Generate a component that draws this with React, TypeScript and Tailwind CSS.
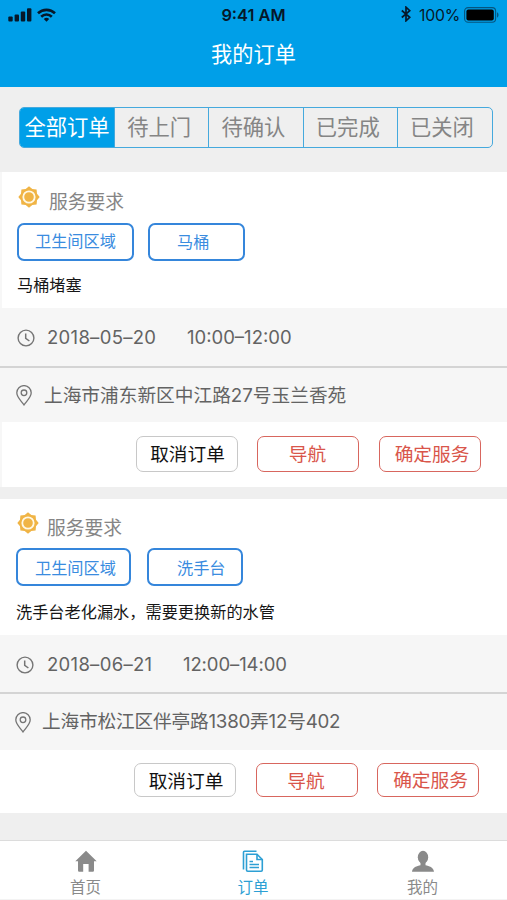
import type { ReactNode } from "react";

type Order = {
  area: string;
  item: string;
  detail: string;
  date: string;
  time: string;
  address: string;
};

const orders: Order[] = [
  {
    area: "卫生间区域",
    item: "马桶",
    detail: "马桶堵塞",
    date: "2018–05–20",
    time: "10:00–12:00",
    address: "上海市浦东新区中江路27号玉兰香苑",
  },
  {
    area: "卫生间区域",
    item: "洗手台",
    detail: "洗手台老化漏水，需要更换新的水管",
    date: "2018–06–21",
    time: "12:00–14:00",
    address: "上海市松江区伴亭路1380弄12号402",
  },
];

const tabs = ["待上门", "待确认", "已完成", "已关闭"];

const SunIcon = () => (
  <svg className="w-[22px] h-[22px] shrink-0" viewBox="0 0 22 22">
    <path
      d="M11 .3 14.3 3 18.6 3.4 19 7.7 21.7 11 19 14.3 18.6 18.6 14.3 19 11 21.7 7.7 19 3.4 18.6 3 14.3 .3 11 3 7.7 3.4 3.4 7.7 3Z"
      fill="#f0b445"
    />
    <circle cx="11" cy="11" r="5.7" fill="#f0b445" stroke="#fff8e4" strokeWidth="1.8" />
  </svg>
);

const ClockIcon = () => (
  <svg className="w-[18px] h-[18px] shrink-0" viewBox="0 0 18 18" fill="none" stroke="#757575">
    <circle cx="9" cy="9" r="7.9" strokeWidth="1.4" />
    <path d="M8.7 4.5V9.3L12.4 12" strokeWidth="1.5" />
  </svg>
);

const PinIcon = () => (
  <svg className="w-4 h-[21px] shrink-0" viewBox="0 0 16 21" fill="none" stroke="#757575" strokeWidth="1.3">
    <path d="M8 20C5.5 16.3.8 12.2.8 7.8a7.2 7.2 0 0 1 14.4 0C15.2 12.2 10.5 16.3 8 20Z" />
    <circle cx="8" cy="7.8" r="2.8" />
  </svg>
);

const StatusBar = () => (
  <div className="flex h-[31px] items-center px-2 text-[#06182a]">
    <div className="flex flex-1 items-center gap-[5px] pb-0.5">
      <svg className="w-6 h-[14px]" viewBox="0 0 24 14" fill="#06182a">
        <rect x="0.3" y="8.5" width="4.4" height="5" rx="1" />
        <rect x="6.6" y="6.5" width="4.4" height="7" rx="1" />
        <rect x="12.8" y="3.5" width="4.4" height="10" rx="1" />
        <rect x="19" y="0.3" width="4.4" height="13.2" rx="1" />
      </svg>
      <svg className="w-[19px] h-[14px]" viewBox="0 0 19 14" fill="none" stroke="#06182a" strokeWidth="2.6">
        <path d="M1 5.3a12.2 12.2 0 0 1 17 0" />
        <path d="M4.2 8.7a7.6 7.6 0 0 1 10.6 0" />
        <path d="M6.8 10.9a4 4 0 0 1 5.4 0L9.5 13.7Z" fill="#06182a" stroke="none" />
      </svg>
    </div>
    <span className="text-[16.4px] font-semibold">9:41 AM</span>
    <div className="flex flex-1 items-center justify-end">
      <svg className="mr-2 mb-1 w-[10px] h-4" viewBox="0 0 10 16" fill="none" stroke="#06182a" strokeWidth="1.7">
        <path d="M.8 4.5 8.8 11.3 5 14.8V1.2L8.8 4.7.8 11.5" />
      </svg>
      <span className="mr-1 text-[15.8px] tracking-[-0.2px]">100%</span>
      <svg className="mb-0.5 w-[35px] h-4" viewBox="0 0 35 16">
        <rect x="0.6" y="0.6" width="31" height="14.6" rx="3.5" fill="none" stroke="#06557f" strokeWidth="1.1" />
        <rect x="2.4" y="2.4" width="27.4" height="11" rx="2" fill="#000" />
        <path d="M33 5.2c2 .8 2 4.6 0 5.4Z" fill="#06557f" />
      </svg>
    </div>
  </div>
);

const Tag = ({ className, children }: { className: string; children: ReactNode }) => (
  <span
    className={`h-[38px] rounded-[7px] border-2 border-[#3586db] text-[16.2px] whitespace-nowrap text-[#3a8cdf] ${className}`}
  >
    {children}
  </span>
);

const ActionButton = ({ className, children }: { className: string; children: ReactNode }) => (
  <button
    className={`flex w-[102px] items-center justify-center rounded-[7px] border-[1.5px] text-[18.7px] ${className}`}
  >
    {children}
  </button>
);

const OrderCard = ({ order, second }: { order: Order; second?: boolean }) => (
  <section className="bg-white">
    <div className={second ? "h-[136px] pl-4 pt-[13px]" : "h-[136px] border-l-2 border-[#f7f7f7] pl-[15px] pt-[14px]"}>
      <div className={second ? "flex h-[23px] items-start gap-2 pl-px" : "flex h-[23px] items-start gap-[9px] pl-px"}>
        <SunIcon />
        <h2 className="pt-1 text-[18.8px] leading-[26px] text-[#858585]">服务要求</h2>
      </div>
      <div className={second ? "mt-[13px] flex gap-4" : "mt-[14px] flex gap-[14px]"}>
        <Tag className={second ? "w-[115px] pl-[17px] leading-[37px]" : "w-[117px] pl-4 leading-[33px]"}>
          {order.area}
        </Tag>
        <Tag className={second ? "w-24 pl-7 leading-[37px]" : "w-[97px] pl-[27px] leading-[34px]"}>
          {order.item}
        </Tag>
      </div>
      <p className={second ? "mt-[14px] text-[16.2px] leading-6 text-[#161616]" : "mt-3 text-[16.2px] leading-6 text-[#161616]"}>
        {order.detail}
      </p>
    </div>
    <div className="bg-[#f6f6f6] text-[18.7px] text-[#636363]">
      <div className={second ? "flex h-[57px] items-center pl-4 pt-0.5" : "flex h-[58px] items-center pl-[17px] pt-0.5"}>
        <ClockIcon />
        <span className={second ? "ml-[13px] w-[136px] text-[18.5px] tracking-[0.3px]" : "ml-3 w-[140px] text-[18.5px] tracking-[0.3px]"}>
          {order.date}
        </span>
        <span className={second ? "text-[18.5px] tracking-[-0.1px]" : "text-[18.5px]"}>{order.time}</span>
      </div>
      <div className={second ? "flex h-[58px] items-center border-t-2 border-[#d4d4d4] pl-[15px]" : "flex h-[56px] items-center border-t-2 border-[#d4d4d4] pl-4"}>
        <PinIcon />
        <span className={second ? "ml-[11px] whitespace-nowrap tracking-[-0.2px]" : "ml-3 pt-0.5 whitespace-nowrap"}>
          {order.address}
        </span>
      </div>
    </div>
    <div className={second ? "flex h-[63px] gap-[19.5px] pl-[134px] pt-[13px]" : "flex h-[65px] gap-[19.5px] border-l-2 border-[#f7f7f7] pl-[133.5px] pt-[14px]"}>
      <ActionButton className={second ? "h-[34px] border-[#c8c8c8] pt-1 pl-0.5 text-[#111]" : "h-9 border-[#c8c8c8] pt-0.5 pl-0.5 text-[#111]"}>
        取消订单
      </ActionButton>
      <ActionButton className={second ? "h-[34px] border-[#d8665e] pt-1 pr-px text-[#d9564b]" : "h-9 border-[#d8665e] pt-0.5 pr-px text-[#d9564b]"}>
        导航
      </ActionButton>
      <ActionButton className={second ? "h-[34px] border-[#d8665e] pt-0.5 pl-[5px] text-[#d9564b]" : "h-9 border-[#d8665e] pt-0.5 pl-[5px] text-[#d9564b]"}>
        确定服务
      </ActionButton>
    </div>
  </section>
);

const TabBar = () => (
  <nav className="grid h-[60px] grid-cols-3 border-t border-b border-t-[#dcdcdc] border-b-[#f3f3f3] bg-white text-[15.5px] leading-5 text-[#8a8a8a]">
    <a className="flex flex-col items-center pl-0.5 pt-[9px]">
      <svg className="w-[22px] h-[22px]" viewBox="0 0 22 22" fill="#8a8a8a">
        <path d="M11 .8.3 11.2H3V20.5q0 1.2 1.2 1.2H8.2V14h5.4v7.7h4.2q1.2 0 1.2-1.2V11.2h2.7Z" />
      </svg>
      <span className="mt-1.5">首页</span>
    </a>
    <a className="flex flex-col items-center pr-px pt-[9px] text-[#2d9fd4]">
      <svg className="w-[22px] h-[22px]" viewBox="0 0 22 22" fill="none" stroke="#2d9fd4" strokeWidth="1.6">
        <path d="M1.5 19.5V2.2q0-1 1-1H14.5" />
        <path d="M4.5 4.2H15L20.3 9.5V20q0 1.2-1.2 1.2H5.7q-1.2 0-1.2-1.2Z" />
        <path d="M15 4.2V9.5H20.3M7.5 11.5H11M7.5 14.5H17M7.5 17.5H17" />
      </svg>
      <span className="mt-1.5">订单</span>
    </a>
    <a className="flex flex-col items-center pt-[9px]">
      <svg className="w-[22px] h-[22px]" viewBox="0 0 22 22" fill="#8a8a8a">
        <ellipse cx="11" cy="7.2" rx="5.2" ry="6.4" />
        <path d="M8.5 12h5v3.2c3.5.8 8.2 2 8.5 6.5H0c.3-4.5 5-5.7 8.5-6.5Z" />
      </svg>
      <span className="mt-1.5">我的</span>
    </a>
  </nav>
);

export default function App() {
  return (
    <div className="flex h-[900px] w-[507px] flex-col overflow-hidden bg-[#efefef] font-['Inter','Noto_Sans_CJK_SC',sans-serif]">
      <header className="h-[87px] bg-[#009fe8]">
        <StatusBar />
        <h1 className="text-center text-[21.2px] leading-[46px] text-white">我的订单</h1>
      </header>
      <div className="mt-5 ml-[19px] flex h-[41px] w-[474px] overflow-hidden rounded-[5px] border border-[#45a9dd] text-[21.3px] text-[#858585]">
        <button className="w-[94px] shrink-0 bg-[#009fe8] whitespace-nowrap text-white">全部订单</button>
        {tabs.map((tab) => (
          <button
            key={tab}
            className="w-[94.3px] border-l border-l-[#45a9dd] pr-[5px] last:flex-1 last:pr-1.5"
          >
            {tab}
          </button>
        ))}
      </div>
      <main className="mt-6 flex flex-1 flex-col gap-3">
        <OrderCard order={orders[0]} />
        <OrderCard order={orders[1]} second />
      </main>
      <TabBar />
    </div>
  );
}
